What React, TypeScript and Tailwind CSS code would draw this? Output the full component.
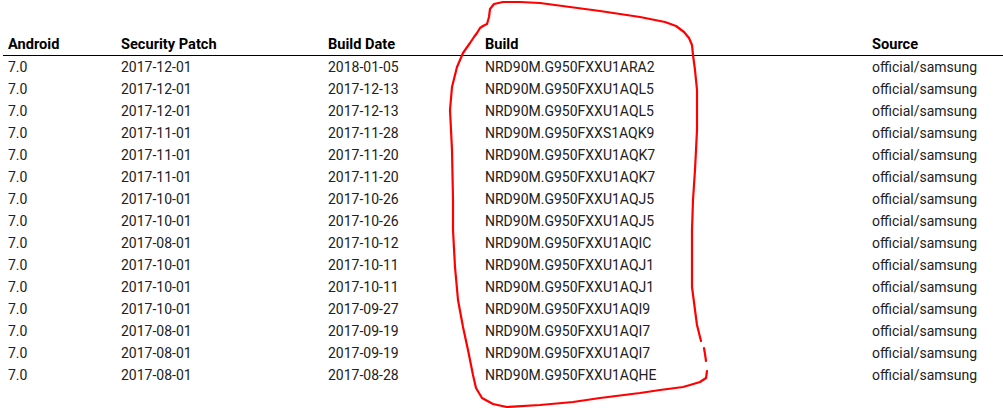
import React from "react";

const rows: [string, string, string, string, string][] = [
  ["7.0", "2017-12-01", "2018-01-05", "NRD90M.G950FXXU1ARA2", "official/samsung"],
  ["7.0", "2017-12-01", "2017-12-13", "NRD90M.G950FXXU1AQL5", "official/samsung"],
  ["7.0", "2017-12-01", "2017-12-13", "NRD90M.G950FXXU1AQL5", "official/samsung"],
  ["7.0", "2017-11-01", "2017-11-28", "NRD90M.G950FXXS1AQK9", "official/samsung"],
  ["7.0", "2017-11-01", "2017-11-20", "NRD90M.G950FXXU1AQK7", "official/samsung"],
  ["7.0", "2017-11-01", "2017-11-20", "NRD90M.G950FXXU1AQK7", "official/samsung"],
  ["7.0", "2017-10-01", "2017-10-26", "NRD90M.G950FXXU1AQJ5", "official/samsung"],
  ["7.0", "2017-10-01", "2017-10-26", "NRD90M.G950FXXU1AQJ5", "official/samsung"],
  ["7.0", "2017-08-01", "2017-10-12", "NRD90M.G950FXXU1AQIC", "official/samsung"],
  ["7.0", "2017-10-01", "2017-10-11", "NRD90M.G950FXXU1AQJ1", "official/samsung"],
  ["7.0", "2017-10-01", "2017-10-11", "NRD90M.G950FXXU1AQJ1", "official/samsung"],
  ["7.0", "2017-10-01", "2017-09-27", "NRD90M.G950FXXU1AQI9", "official/samsung"],
  ["7.0", "2017-08-01", "2017-09-19", "NRD90M.G950FXXU1AQI7", "official/samsung"],
  ["7.0", "2017-08-01", "2017-09-19", "NRD90M.G950FXXU1AQI7", "official/samsung"],
  ["7.0", "2017-08-01", "2017-08-28", "NRD90M.G950FXXU1AQHE", "official/samsung"],
];

const cols = "grid grid-cols-[113px_207px_157px_387px_1fr]";

const pts1 =
  "483,26 487,24 489,17 490,9 494,4 503,2 520,2 540,3 570,7 600,11 640,17 665,22 676,26 684,32 689,38 692,45 693,55 695,70 697,90 697,130 695,170 693,200 692,230 692,260 692,287 695,310 697,325 700,337 701,341";
const pts2 = "704,348 705,354 706,361";
const pts3 =
  "707,371 706,378 700,382 690,385 683,387 660,390 640,393 600,398 573,402 540,405 507,407 493,404 482,398 476,388 473,375 468,350 463,327 458,300 455,267 453,230 453,200 452,150 450,110 452,87 457,67 463,53 470,43 474,37 477,33 480,28 483,26";

export default function App() {
  return (
    <div
      className="relative w-[1003px] h-[408px] overflow-hidden bg-white text-[14px] leading-[22px]"
      style={{ fontFamily: "Roboto, 'Noto Sans', sans-serif" }}
    >
      <div className="pt-[33px] pl-[3px]">
        <div className={`${cols} border-b border-black font-bold text-black text-[14.6px]`}>
          <div className="pl-[5px]">Android</div>
          <div className="pl-[5px]">Security Patch</div>
          <div className="pl-[5px]">Build Date</div>
          <div className="pl-[5px]">Build</div>
          <div className="pl-[5px]">Source</div>
        </div>
        {rows.map((r, i) => (
          <div key={i} className={`${cols} text-[#212121]`}>
            {r.map((c, j) => (
              <div key={j} className="pl-[5px] whitespace-nowrap">
                {c}
              </div>
            ))}
          </div>
        ))}
      </div>
      <svg
        className="absolute left-0 top-0 pointer-events-none"
        width="1003"
        height="408"
        viewBox="0 0 1003 408"
      >
        {[pts1, pts2, pts3].map((p, i) => (
          <polyline
            key={i}
            points={p}
            fill="none"
            stroke="#ff0000"
            strokeWidth="2.2"
            strokeLinejoin="round"
            strokeLinecap="round"
          />
        ))}
      </svg>
    </div>
  );
}
